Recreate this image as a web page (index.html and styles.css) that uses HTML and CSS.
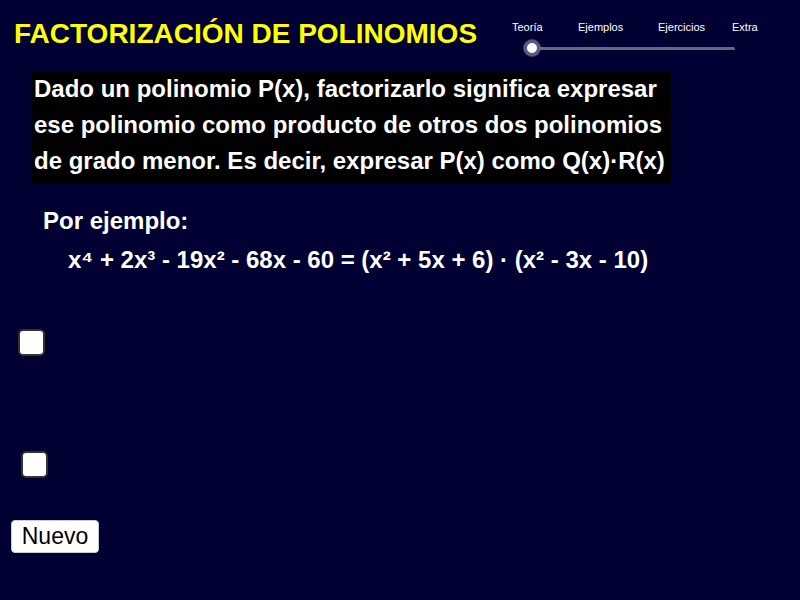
FILE: index.html
```html
<!DOCTYPE html>
<html lang="es">
<head>
<meta charset="utf-8">
<title>Factorización de polinomios</title>
<link rel="stylesheet" href="styles.css">
</head>
<body>
<div class="page">
  <header class="top">
    <h1 class="title">FACTORIZACIÓN DE POLINOMIOS</h1>
    <nav class="nav">
      <div class="labels">
        <span>Teoría</span>
        <span>Ejemplos</span>
        <span>Ejercicios</span>
        <span>Extra</span>
      </div>
      <div class="slider">
        <div class="track"></div>
        <div class="knob"></div>
      </div>
    </nav>
  </header>
  <p class="def">Dado un polinomio P(x), factorizarlo significa expresar<br>ese polinomio como producto de otros dos polinomios<br>de grado menor. Es decir, expresar P(x) como Q(x)·R(x)</p>
  <p class="ex-label">Por ejemplo:</p>
  <p class="formula">x⁴ + 2x³ - 19x² - 68x - 60 = (x² + 5x + 6) · (x² - 3x - 10)</p>
  <div class="check check-1"></div>
  <div class="check check-2"></div>
  <button class="btn">Nuevo</button>
</div>
</body>
</html>
```

FILE: styles.css
```css
html, body {
  margin: 0;
  padding: 0;
  background: #000033;
}
.page {
  width: 800px;
  height: 600px;
  overflow: hidden;
  background: #000033;
  font-family: "Liberation Sans", Arial, sans-serif;
  color: #ffffff;
  display: flex;
  flex-direction: column;
  align-items: flex-start;
}
.top {
  display: grid;
  grid-template-columns: 512px 1fr;
  padding-top: 20px;
  height: 28px;
  width: 800px;
}
.title {
  margin: 0;
  padding-left: 14px;
  font-size: 28px;
  line-height: 28px;
  font-weight: bold;
  color: #ffff00;
  white-space: nowrap;
}
.nav {
  padding-top: 1px;
}
.labels {
  display: grid;
  grid-template-columns: 66px 80px 74px auto;
  font-size: 11px;
  line-height: 13px;
  color: #ffffff;
}
.slider {
  position: relative;
  margin-top: 6px;
  height: 18px;
  width: 224px;
}
.track {
  position: absolute;
  left: 21px;
  top: 7px;
  width: 202px;
  height: 3px;
  border-radius: 2px;
  background: #666689;
}
.knob {
  position: absolute;
  left: 12px;
  top: 0;
  width: 10px;
  height: 10px;
  border-radius: 50%;
  background: #ffffff;
  border: 3px solid #5c5c82;
  box-shadow: 0 0 0 1px rgba(140, 140, 170, 0.5);
}
.def {
  margin: 23px 0 0 31px;
  width: 633px;
  padding: 0 4px 5px 3px;
  background: #000000;
  font-size: 24px;
  line-height: 36px;
  font-weight: bold;
  white-space: nowrap;
}
.ex-label {
  margin: 23px 0 0 43px;
  font-size: 24px;
  line-height: 28px;
  font-weight: bold;
}
.formula {
  margin: 11px 0 0 68px;
  font-size: 24px;
  line-height: 28px;
  font-weight: bold;
  white-space: nowrap;
}
.check {
  width: 23px;
  height: 23px;
  background: #ffffff;
  border: 2px solid #333333;
  border-radius: 5px;
}
.check-1 {
  margin: 55px 0 0 18px;
}
.check-2 {
  margin: 95px 0 0 21px;
}
.btn {
  margin: 42px 0 0 11px;
  width: 88px;
  height: 33px;
  padding: 0;
  background: #ffffff;
  border: 1px solid #cccccc;
  border-radius: 4px;
  font-family: "Liberation Sans", Arial, sans-serif;
  font-size: 23px;
  color: #000000;
}
```
